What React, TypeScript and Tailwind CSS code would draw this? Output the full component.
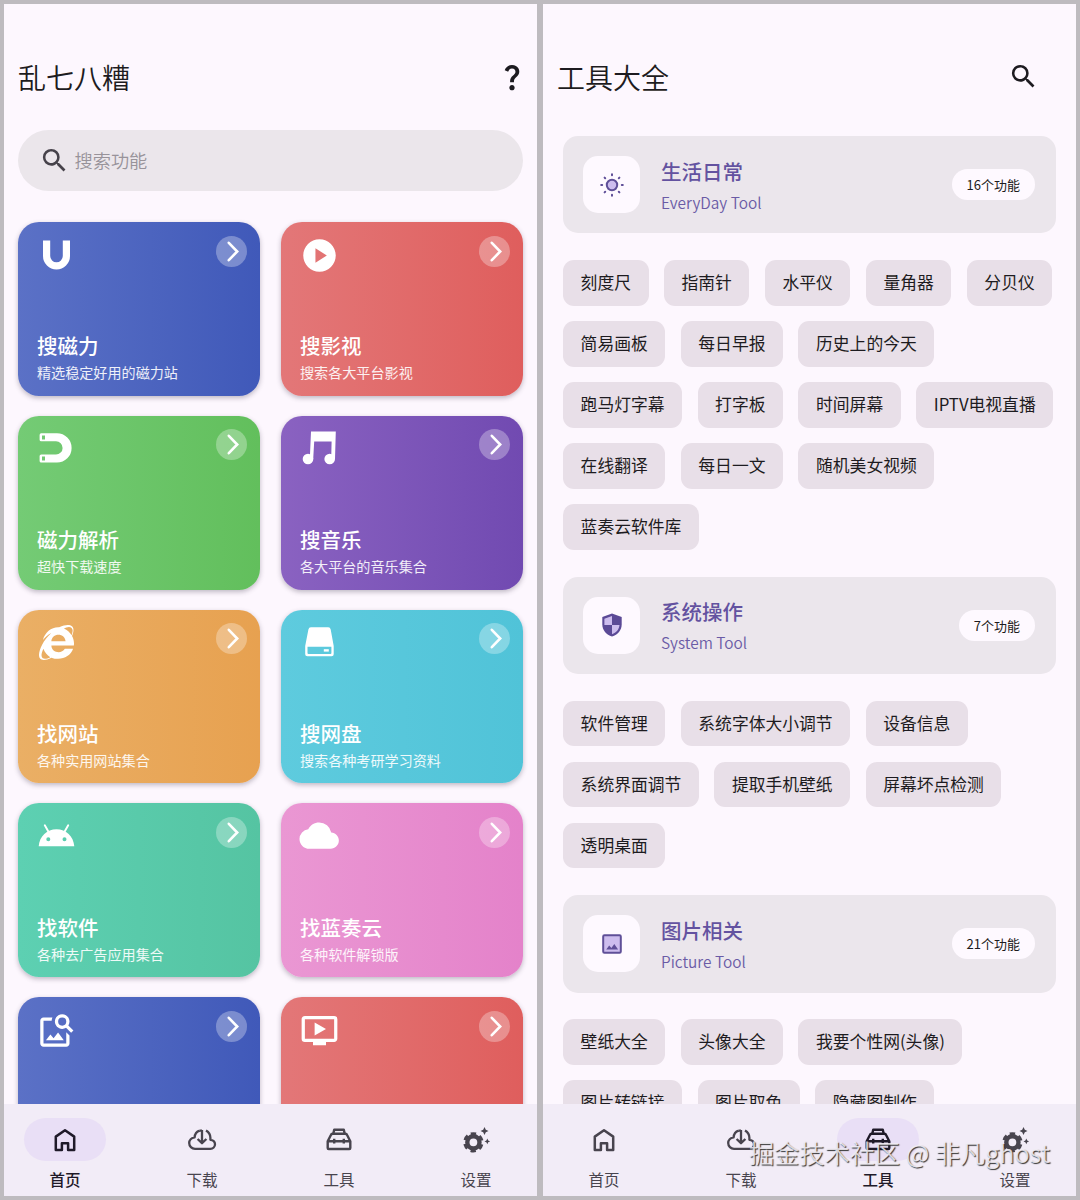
import type { ReactNode } from 'react';
import clsx from 'clsx';
import { FaInternetExplorer } from 'react-icons/fa';
import { MdImageSearch, MdOndemandVideo, MdPlayCircle, MdQuestionMark, MdSearch } from 'react-icons/md';

type FeatureCard = {
  title: string;
  subtitle: string;
  gradient: string;
  icon: ReactNode;
};

type ToolSection = {
  title: string;
  subtitle: string;
  count: string;
  icon: ReactNode;
  tools: string[];
};

const MagnetUpIcon = () => (
  <svg viewBox="0 0 41 41" className="size-[41px]" fill="none" stroke="currentColor" strokeWidth="7.2">
    <path d="M10.6 5.6v15.4a9.9 9.9 0 0 0 19.8 0V5.6" />
  </svg>
);

const MagnetIcon = () => (
  <svg viewBox="0 0 41 41" className="size-[41px]" fill="currentColor" fillRule="evenodd">
    <path d="M5.2 5.3H21a14.6 14.6 0 0 1 0 29.2H5.2a1.6 1.6 0 0 1-1.6-1.6v-4.8a1.6 1.6 0 0 1 1.6-1.6H20a6.6 6.6 0 0 0 0-13.2H5.2a1.6 1.6 0 0 1-1.6-1.6V6.9a1.6 1.6 0 0 1 1.6-1.6ZM6 7.5v4h3v-4ZM6 28.5v4h3v-4Z" />
  </svg>
);

const MusicIcon = () => (
  <svg viewBox="0 0 41 41" className="size-[41px]" fill="currentColor">
    <path d="M12 3.6H36.8L36 31H32.2L32.6 13.4H15.2L14.2 31H10.8Z" />
    <circle cx="9" cy="31" r="5.3" />
    <circle cx="30.7" cy="31" r="5.3" />
  </svg>
);

const DriveIcon = () => (
  <svg viewBox="0 0 41 41" className="size-[41px]" fill="currentColor" fillRule="evenodd">
    <path d="M12 5.3H29.200a2.6 2.6 0 0 1 2.5 2.100L34.700 24V32.200a2.1 2.1 0 0 1-2.1 2.1H8.300a2.1 2.1 0 0 1-2.1-2.100V24L9.400 7.400A2.6 2.6 0 0 1 12 5.300ZM8.500 24.700V31a.9.9 0 0 0 .9.9H31.500a.9.9 0 0 0 .9-.9V24.700Z" />
    <rect x="24.8" y="27.200" width="5" height="2.400" />
  </svg>
);

const AndroidIcon = () => (
  <svg viewBox="0 0 41 41" className="size-[41px]" fill="currentColor">
    <path
      fillRule="evenodd"
      d="M2.7 30.3C3.5 20 11 13.2 20.5 13.2S37.5 20 38.3 30.3ZM12.3 21.2a2 2 0 1 0 0 4 2 2 0 0 0 0-4ZM28.5 21.2a2 2 0 1 0 0 4 2 2 0 0 0 0-4Z"
    />
    <path d="M8.8 9.3 12.6 16M32.2 9.3 28.4 16" stroke="currentColor" strokeWidth="1.9" strokeLinecap="round" />
  </svg>
);

const CloudIcon = () => (
  <svg viewBox="-0.3 0 25 25" className="size-[41px]" fill="currentColor">
    <path d="M19.35 10.04A7.49 7.49 0 0 0 12 4C9.11 4 6.6 5.64 5.35 8.04A5.994 5.994 0 0 0 0 14c0 3.31 2.69 6 6 6h13c2.76 0 5-2.24 5-5 0-2.64-2.05-4.78-4.65-4.96z" />
  </svg>
);

const SunIcon = () => (
  <svg viewBox="0 0 28 28" className="size-7" stroke="#5f4f98" strokeWidth="2" strokeLinecap="round">
    <circle cx="14" cy="14" r="5.2" fill="#cdbdee" />
    <path d="M14 3.2v1M14 23.8v1M3.2 14h1M23.8 14h1M6.600 6.600l.6.6M20.800 20.800l.6.6M6.600 21.400l.6-.6M20.800 7.200l.6-.6" />
  </svg>
);

const ShieldIcon = () => (
  <svg viewBox="0 0 28 28" className="size-7">
    <path d="M14 2.5 23.7 6.1V13.3C23.7 19.2 19.7 23.8 14 25.5 8.3 23.8 4.3 19.2 4.3 13.3V6.1Z" fill="#5b4a96" />
    <path d="M14 5V14H6.4V7.7ZM14 14H21.5C21.1 18.4 18.3 21.8 14 23.2Z" fill="#cdbdee" />
  </svg>
);

const PictureIcon = () => (
  <svg viewBox="0 0 28 28" className="size-7">
    <rect x="5.2" y="5.2" width="17.6" height="17.6" rx="1.2" fill="#cdbdee" stroke="#5f4f98" strokeWidth="2" />
    <path d="m8.2 19.6 3-4 2.2 2.5 2.9-4 3.8 5.5Z" fill="#5f4f98" />
  </svg>
);

const HomeIcon = () => (
  <svg viewBox="0 0 30 30" className="size-[30px]" fill="none" stroke="currentColor" strokeWidth="2.5" strokeLinejoin="round">
    <path d="M5.8 11.6 15 5.3 24.2 11.6V25H18.1V18.3H11.9V25H5.8Z" />
  </svg>
);

const DownloadIcon = () => (
  <svg viewBox="0 0 30 30" className="size-[30px]" fill="none" stroke="currentColor" strokeWidth="2.3" strokeLinejoin="round">
    <path d="M12.8 5.6C9.8 6.5 7.8 9.2 7.6 12.4 4.5 12.8 2.2 15.2 2.2 18.1 2.2 21.3 4.8 23.8 8 23.8H23.4C26 23.8 28 21.8 28 19.3 28 16.8 26 14.9 23.4 14.8V12.8C23.4 9.6 21.8 7 19 5.4" />
    <path d="M15 5V18M10.6 14 15 18.2 19.4 14M15 5.6H12.8" />
  </svg>
);

const ToolboxIcon = () => (
  <svg viewBox="0 0 30 30" className="size-[30px]" fill="none" stroke="currentColor" strokeWidth="2.4" strokeLinejoin="round">
    <path d="M9.3 8.8 10.2 4.7H19.8L20.7 8.8" />
    <path d="M8.6 8.8H21.4a1.8 1.8 0 0 1 1.7 1.2L26.3 16.2V23a1 1 0 0 1-1 1H4.7a1 1 0 0 1-1-1V16.2L6.9 10A1.8 1.8 0 0 1 8.6 8.8ZM3.7 16.2H26.3" />
    <path d="M10.2 13.8v4.8M19.8 13.8v4.8" />
  </svg>
);

const SettingsIcon = () => (
  <svg viewBox="0 0 30 30" className="size-[30px]" fill="none" stroke="currentColor">
    <circle cx="12.4" cy="17.3" r="6.1" strokeWidth="4.4" />
    <circle
      cx="12.4"
      cy="17.3"
      r="8.7"
      strokeWidth="2.9"
      strokeDasharray="5.2 3.911"
      transform="rotate(-107 12.4 17.3)"
    />
    <path
      d="M23.5 2 24.8 4.700 27.500 6 24.800 7.300 23.500 10 22.200 7.300 19.500 6 22.200 4.700ZM26.300 13.600 27.200 15.500 29.100 16.400 27.200 17.300 26.300 19.200 25.400 17.300 23.500 16.400 25.400 15.500Z"
      fill="currentColor"
      stroke="none"
    />
  </svg>
);

const cards: FeatureCard[] = [
  { title: '搜磁力', subtitle: '精选稳定好用的磁力站', gradient: 'from-[#5b71c6] to-[#4059b9]', icon: <MagnetUpIcon /> },
  { title: '搜影视', subtitle: '搜索各大平台影视', gradient: 'from-[#e37778] to-[#df5e5d]', icon: <MdPlayCircle className="m-px size-[39px]" /> },
  { title: '磁力解析', subtitle: '超快下载速度', gradient: 'from-[#74cb75] to-[#62bf5c]', icon: <MagnetIcon /> },
  { title: '搜音乐', subtitle: '各大平台的音乐集合', gradient: 'from-[#8a62c1] to-[#714ab1]', icon: <MusicIcon /> },
  { title: '找网站', subtitle: '各种实用网站集合', gradient: 'from-[#eaaf65] to-[#e7a150]', icon: <FaInternetExplorer className="m-[3px] size-[35px]" /> },
  { title: '搜网盘', subtitle: '搜索各种考研学习资料', gradient: 'from-[#5ecbde] to-[#50c3d8]', icon: <DriveIcon /> },
  { title: '找软件', subtitle: '各种去广告应用集合', gradient: 'from-[#5dd0b2] to-[#55c4a2]', icon: <AndroidIcon /> },
  { title: '找蓝奏云', subtitle: '各种软件解锁版', gradient: 'from-[#ea97d3] to-[#e482ca]', icon: <CloudIcon /> },
];

// the last row is cut by the bottom bar, only its top part with the icon is laid out
const peekCards: FeatureCard[] = [
  { title: '', subtitle: '', gradient: 'from-[#5b71c6] to-[#4059b9]', icon: <MdImageSearch className="m-px size-[39px]" /> },
  { title: '', subtitle: '', gradient: 'from-[#e37778] to-[#df5e5d]', icon: <MdOndemandVideo className="m-px size-[39px]" /> },
];

const sections: ToolSection[] = [
  {
    title: '生活日常',
    subtitle: 'EveryDay Tool',
    count: '16个功能',
    icon: <SunIcon />,
    tools: [
      '刻度尺', '指南针', '水平仪', '量角器', '分贝仪', '简易画板', '每日早报', '历史上的今天',
      '跑马灯字幕', '打字板', '时间屏幕', 'IPTV电视直播', '在线翻译', '每日一文', '随机美女视频', '蓝奏云软件库',
    ],
  },
  {
    title: '系统操作',
    subtitle: 'System Tool',
    count: '7个功能',
    icon: <ShieldIcon />,
    tools: ['软件管理', '系统字体大小调节', '设备信息', '系统界面调节', '提取手机壁纸', '屏幕坏点检测', '透明桌面'],
  },
  {
    title: '图片相关',
    subtitle: 'Picture Tool',
    count: '21个功能',
    icon: <PictureIcon />,
    tools: ['壁纸大全', '头像大全', '我要个性网(头像)', '图片转链接', '图片取色', '隐藏图制作'],
  },
];

const navItems = [
  { label: '首页', icon: <HomeIcon /> },
  { label: '下载', icon: <DownloadIcon /> },
  { label: '工具', icon: <ToolboxIcon /> },
  { label: '设置', icon: <SettingsIcon /> },
];

const BottomNav = ({ active }: { active: string }) => (
  <nav className="flex h-[92px] shrink-0 justify-between bg-[#f2ecf7] px-5 pt-[14px]">
    {navItems.map((item) => {
      const isActive = item.label === active;
      return (
        <button
          key={item.label}
          type="button"
          className={clsx('flex w-[82px] flex-col items-center', isActive ? 'text-[#1f1a29]' : 'text-[#48444e]')}
        >
          <span
            className={clsx('flex h-[43px] w-full items-center justify-center rounded-full', isActive && 'bg-[#e9dff6]')}
          >
            {item.icon}
          </span>
          <span className={clsx('mt-[7px] text-[15.5px] leading-[22px]', isActive && 'font-medium')}>{item.label}</span>
        </button>
      );
    })}
  </nav>
);

const Card = ({ card }: { card: FeatureCard }) => (
  <div
    className={clsx(
      'flex h-[173.7px] flex-col justify-between rounded-[21px] bg-linear-to-r pt-[12.5px] pr-[13px] pb-[13.5px] pl-[18px] text-white shadow-[0_2px_5px_rgba(60,50,70,0.32)]',
      card.gradient,
    )}
  >
    <div className="flex items-start justify-between">
      {card.icon}
      <span className="mt-px flex size-[31px] items-center justify-center rounded-full bg-white/30">
        <svg viewBox="0 0 31 31" className="size-[31px]" fill="none" stroke="currentColor" strokeWidth="2.6" strokeLinecap="round">
          <path d="M12.800 6.800 21.200 15.500 12.800 24.200" />
        </svg>
      </span>
    </div>
    {card.title && (
      <div className="pl-px">
        <h2 className="text-[20.5px] leading-[28px] font-medium">{card.title}</h2>
        <p className="mt-[3px] text-[14.1px] leading-[20px] text-white/90">{card.subtitle}</p>
      </div>
    )}
  </div>
);

const HomeScreen = () => (
  <section className="flex w-[533px] flex-col overflow-hidden bg-[#fdf7fe]">
    <header className="flex h-[126px] shrink-0 items-start justify-between pt-[52px] pr-[9px] pl-[14px]">
      <h1 className="text-[28px] leading-[42px] font-[350] text-[#1d1b20]">乱七八糟</h1>
      <MdQuestionMark className="mt-[5px] size-[32px] text-[#1d1b20]" />
    </header>
    <div className="min-h-0 flex-1 overflow-hidden px-[14px]">
      <div className="flex h-[61px] items-center rounded-full bg-[#ebe6eb] pl-[20.5px] text-[#46424a]">
        <MdSearch className="size-[31px]" />
        <span className="ml-[5px] pb-[2px] text-[18.2px] leading-[26px] font-[350] text-[#98939a]">搜索功能</span>
      </div>
      <div className="mt-[31.3px] grid grid-cols-2 gap-x-[21px] gap-y-[20px]">
        {cards.map((card) => (
          <Card key={card.title} card={card} />
        ))}
        {peekCards.map((card, index) => (
          <Card key={index} card={card} />
        ))}
      </div>
    </div>
    <BottomNav active="首页" />
  </section>
);

const Section = ({ section }: { section: ToolSection }) => (
  <div>
    <div className="flex h-[97.6px] items-center rounded-[15px] bg-[#ebe6ec] pr-[21px] pl-5">
      <div className="flex size-[57px] items-center justify-center rounded-[15px] bg-[#fef9ff]">{section.icon}</div>
      <div className="ml-[21px] flex-1 pt-[3px]">
        <h2 className="text-[20.5px] leading-[30px] font-medium text-[#6352a0]">{section.title}</h2>
        <p className="mt-px text-[15.4px] leading-[30px] font-[350] text-[#6a5ba6]">{section.subtitle}</p>
      </div>
      <span className="rounded-full bg-[#fef9ff] px-[15px] text-[13px] leading-[31px] text-[#1d1b20]">
        {section.count}
      </span>
    </div>
    <div className="mt-[26.4px] flex flex-wrap gap-[15.4px]">
      {section.tools.map((tool) => (
        <span
          key={tool}
          className="rounded-[11px] bg-[#e8dfe8] px-[17.6px] text-[16.8px] leading-[45.7px] whitespace-nowrap text-[#1d1b20]"
        >
          {tool}
        </span>
      ))}
    </div>
  </div>
);

const ToolsScreen = () => (
  <section className="flex w-[533px] flex-col overflow-hidden bg-[#fdf7fe]">
    <header className="flex h-[126px] shrink-0 items-start justify-between pt-[52px] pr-[37px] pl-[14px]">
      <h1 className="text-[28px] leading-[42px] font-[350] text-[#1d1b20]">工具大全</h1>
      <MdSearch className="mt-[5px] size-[31px] text-[#1d1b20]" />
    </header>
    <div className="flex min-h-0 flex-1 flex-col gap-[26.6px] overflow-hidden px-5 pt-[5.9px]">
      {sections.map((section) => (
        <Section key={section.title} section={section} />
      ))}
    </div>
    <BottomNav active="工具" />
  </section>
);

export default function App() {
  return (
    <div className="relative flex h-[1200px] w-[1080px] gap-[6px] overflow-hidden bg-[#bebbbf] p-1 font-['Noto_Sans_CJK_SC',sans-serif]">
      <HomeScreen />
      <ToolsScreen />
      <p className="absolute right-[30px] bottom-[30px] text-[25.2px] leading-[36px] font-[350] whitespace-nowrap text-[#f4f0f6]/85 [text-shadow:1px_1px_1px_#333]">
        掘金技术社区 @ 非凡ghost
      </p>
    </div>
  );
}
